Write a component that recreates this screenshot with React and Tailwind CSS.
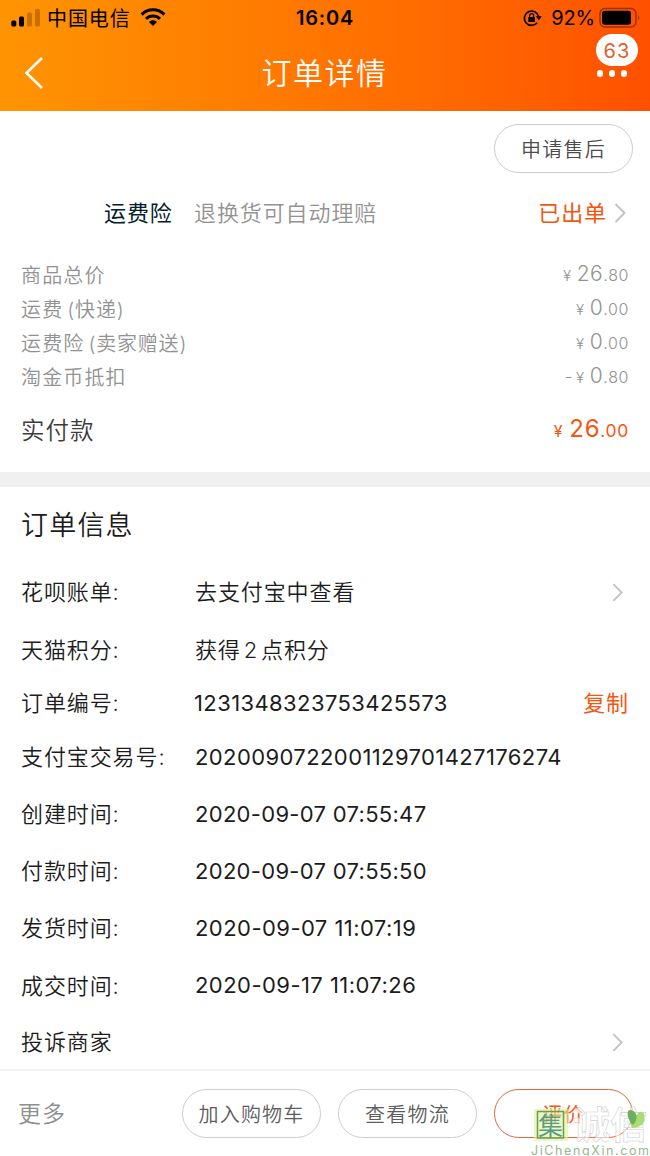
const Chevron = ({ className = '' }) => (
  <svg className={className} viewBox="0 0 14 22" fill="none" stroke="#c3c3c3" strokeWidth="2">
    <path d="M2.5 2 L11.5 11 L2.5 20" />
  </svg>
);

const Price = ({ prefix = '', whole, cents }) => (
  <span className="flex items-baseline pb-[3px] leading-none font-[350] tracking-[0.6px] text-[#929292]">
    <span className="mr-[3px] text-[17px]">{prefix}</span>
    <span className="mr-[5px] text-[15px]">¥</span>
    <span className="text-[21px]">{whole}</span>
    <span className="text-[16px]">.{cents}</span>
  </span>
);

const charges = [
  { label: '商品总价', whole: '26', cents: '80' },
  { label: '运费', note: '(快递)', whole: '0', cents: '00' },
  { label: '运费险', note: '(卖家赠送)', whole: '0', cents: '00' },
  { label: '淘金币抵扣', whole: '0', cents: '80', prefix: '-' },
];

const rows = [
  { h: 'h-[58px]', label: '花呗账单:', value: '去支付宝中查看', track: 'pt-px font-[350] tracking-[0.9px]', chevron: true },
  {
    h: 'h-[57px]',
    label: '天猫积分:',
    value: (
      <>
        获得<span className="mx-[3px]">2</span>点积分
      </>
    ),
    track: 'pt-px font-[350] tracking-[0.85px]',
  },
  { h: 'h-[50px]', label: '订单编号:', value: '1231348323753425573', track: '-ml-[1px] tracking-[0.4px]', copy: true },
  { h: 'h-[58px]', label: '支付宝交易号:', value: '2020090722001129701427176274', track: 'tracking-[0.4px]' },
  { h: 'h-[56px]', label: '创建时间:', value: '2020-09-07 07:55:47', track: 'tracking-[0.3px]' },
  { h: 'h-[58px]', label: '付款时间:', value: '2020-09-07 07:55:50', track: 'tracking-[0.3px]' },
  { h: 'h-[56px]', label: '发货时间:', value: '2020-09-07 11:07:19', track: 'tracking-[0.45px]' },
  { h: 'h-[59px]', label: '成交时间:', value: '2020-09-17 11:07:26', track: 'tracking-[0.45px]' },
  { h: 'h-[54px]', label: '投诉商家', value: '', track: '', chevron: true },
];

const StatusBar = () => (
  <div className="flex h-[36px] items-center pr-[9px] pl-[11px] text-black">
    <div className="flex w-[190px] items-center">
      <svg className="-mt-[3px]" width="30" height="20" viewBox="0 0 30 20">
        <rect x="0.300" y="13.500" width="5" height="6" rx="1.500" />
        <rect x="8" y="9.500" width="5" height="10" rx="1.500" />
        <rect x="16" y="5.500" width="5" height="14" rx="1.500" fillOpacity=".22" />
        <rect x="24" y="2" width="5" height="17.500" rx="1.500" fillOpacity=".22" />
      </svg>
      <span className="ml-[6px] pt-[2px] text-[20px] tracking-[0.900px]">中国电信</span>
      <svg className="-mt-[2px] ml-[9px]" width="26" height="20" viewBox="0 0 27 20">
        <g fill="none" stroke="#000" strokeWidth="3.200">
          <path d="M1.700 7.500 C8 .9 19 .9 25.300 7.500" />
          <path d="M6.200 12 C10.200 8 16.800 8 20.800 12" />
        </g>
        <path d="M9.300 15.200 C11.600 12.900 15.400 12.900 17.700 15.200 L13.500 19.300 Z" />
      </svg>
    </div>
    <div className="w-[248px] text-center text-[20px] font-semibold tracking-[0.800px]">16:04</div>
    <div className="flex flex-1 items-center justify-end">
      <svg width="19" height="18" viewBox="0 0 19 18">
        <path d="M14.200 13.800 A7.200 7.200 0 1 1 15.600 7.500" fill="none" stroke="#000" strokeWidth="1.700" />
        <path d="M12.700 7.300 H18.700 L15.900 11.300 Z" />
        <rect x="5.300" y="8" width="6.600" height="5" rx=".6" />
        <path d="M6.600 8.500 V6.600 a2 2 0 0 1 4 0 V8.500" fill="none" stroke="#000" strokeWidth="1.300" />
      </svg>
      <span className="ml-[9px] text-[20px] tracking-[-0.200px]">92%</span>
      <svg className="-mt-[1px] ml-[4px]" width="42" height="22" viewBox="0 0 42 22">
        <rect x="1" y="1.500" width="36" height="18.500" rx="5" fill="none" stroke="#000" strokeOpacity=".4" strokeWidth="1.500" />
        <rect x="3" y="3.700" width="29" height="14" rx="3" />
        <path d="M39.300 8 q2 2.700 0 5.500 Z" fillOpacity=".45" />
      </svg>
    </div>
  </div>
);

const Watermark = () => (
  <svg className="pointer-events-none absolute right-0 bottom-0" width="125" height="61" viewBox="0 0 125 61">
    <rect x="9" y="14" width="34" height="32" fill="#dcf59a" fillOpacity=".6" />
    <rect x="12.500" y="16.500" width="26" height="26.500" fill="none" stroke="#6f9858" strokeWidth="1.500" />
    <text x="13" y="39.500" fontSize="25" fill="#5c9c86">集</text>
    <text x="48" y="44" fontSize="37" fontWeight="700" fill="#fff" fillOpacity=".65" stroke="#cfcfcf" strokeWidth=".6">诚信</text>
    <path d="M107 33 C103 24 107 19 112 20 C114 14 120 17 119.500 22 C121 29 114 33 107 33 Z" fill="#a9dc74" />
    <path d="M108 30 C102 25 101 15 105 15 C112 15 114 24 108 30 Z" fill="#6fae5e" />
    <text x="6" y="59.500" fontSize="12.500" textLength="118" fill="#94b98c">JiChengXin.com</text>
  </svg>
);

export default function App() {
  return (
    <div className="relative flex h-[1156px] w-[650px] flex-col overflow-hidden bg-white font-['Inter','Noto_Sans_CJK_SC',sans-serif] text-[#1c1c1c]">
      <header className="h-[111px] bg-linear-to-r from-[#ff9402] to-[#ff5000]">
        <StatusBar />
        <div className="flex h-[75px] items-center justify-between pr-[12px] pl-[24px] text-white">
          <svg className="-mt-[2px] w-[42px]" width="42" height="34" viewBox="0 0 42 34" fill="none" stroke="#fff" strokeWidth="2.500">
            <path d="M18 2 L2.500 17 L18 32" />
          </svg>
          <h1 className="mr-[13px] text-[30px] font-[350] tracking-[1.500px]">订单详情</h1>
          <div className="flex h-full w-[42px] flex-col items-center">
            <span className="-mt-[2px] flex h-[32px] w-[42px] shrink-0 items-center justify-center rounded-full bg-white pt-px text-[20px] tracking-[1px] text-[#e06030]">63</span>
            <span className="mt-[4px] mr-[10px] flex gap-[5.500px]">
              <i className="size-[6.500px] rounded-full bg-white" />
              <i className="size-[6.500px] rounded-full bg-white" />
              <i className="size-[6.500px] rounded-full bg-white" />
            </span>
          </div>
        </div>
      </header>

      <section className="h-[361px]">
        <div className="flex justify-end pt-[13px] pr-[17px]">
          <button className="h-[49px] w-[139px] rounded-full border border-[#ccc] pt-[2px] text-[20px] font-[350] tracking-[1.200px] text-[#4c4c4c]">申请售后</button>
        </div>
        <div className="mt-[20px] flex h-[40px] items-center pr-[23px] pl-[104px] text-[22px] tracking-[0.900px]">
          <span className="w-[90px] pt-px text-[#05202c]">运费险</span>
          <span className="flex-1 pt-px font-[350] text-[#939393]">退换货可自动理赔</span>
          <span className="pt-px text-[#f5560f]">已出单</span>
          <Chevron className="ml-[6px] h-[22px] w-[14px]" />
        </div>
        <div className="mt-[25px] px-[21px]">
          {charges.map((c) => (
            <div key={c.label} className="flex h-[34px] items-center justify-between">
              <span className="flex gap-[4px] pt-[2px] text-[20px] font-[350] tracking-[1.150px] text-[#929292]">
                {c.label}
                {c.note && <span className="tracking-[0.800px]">{c.note}</span>}
              </span>
              <Price prefix={c.prefix} whole={c.whole} cents={c.cents} />
            </div>
          ))}
        </div>
        <div className="mt-[16px] flex h-[40px] items-center justify-between px-[21px]">
          <span className="pt-[2px] text-[23.500px] font-[350] tracking-[1px] text-[#3c3c3c]">实付款</span>
          <span className="flex items-baseline pb-[2px] leading-none tracking-[0.700px] text-[#f5560f]">
            <span className="mr-[6px] text-[16px]">¥</span>
            <span className="text-[24px]">26</span>
            <span className="text-[17.500px]">.00</span>
          </span>
        </div>
      </section>

      <div className="h-[15px] bg-[#f0f0f0]" />

      <section className="h-[582px]">
        <h2 className="flex h-[76px] items-center pt-[2px] pl-[21px] text-[27px] font-[350] tracking-[1.200px]">订单信息</h2>
        {rows.map((r) => (
          <div key={r.label} className={`flex items-center pl-[21px] text-[22px] tracking-[0.900px] ${r.h}`}>
            <span className="w-[174px] pt-px font-[350]">{r.label}</span>
            <span className={`flex-1 ${r.track}`}>{r.value}</span>
            {r.chevron && <Chevron className="mr-[26px] h-[21px] w-[13px]" />}
            {r.copy && <button className="mr-[21px] pt-px text-[#f5560f]">复制</button>}
          </div>
        ))}
      </section>

      <footer className="flex h-[87px] items-center gap-[17px] border-t-2 border-[#f2f2f2] pr-[17px] pl-[18px]">
        <span className="flex-1 pt-[2px] text-[23px] font-[350] tracking-[1px] text-[#8f8f8f]">更多</span>
        <button className="h-[49px] w-[139px] rounded-full border border-[#ccc] pt-[2px] text-[20px] font-[350] tracking-[1.200px] text-[#5c5c5c]">加入购物车</button>
        <button className="h-[49px] w-[139px] rounded-full border border-[#ccc] pt-[2px] text-[20px] font-[350] tracking-[1.200px] text-[#5c5c5c]">查看物流</button>
        <button className="h-[49px] w-[139px] rounded-full border border-[#df6638] pt-[2px] text-[20px] tracking-[1.200px] text-[#f5560f]">评价</button>
      </footer>
      <Watermark />
    </div>
  );
}
